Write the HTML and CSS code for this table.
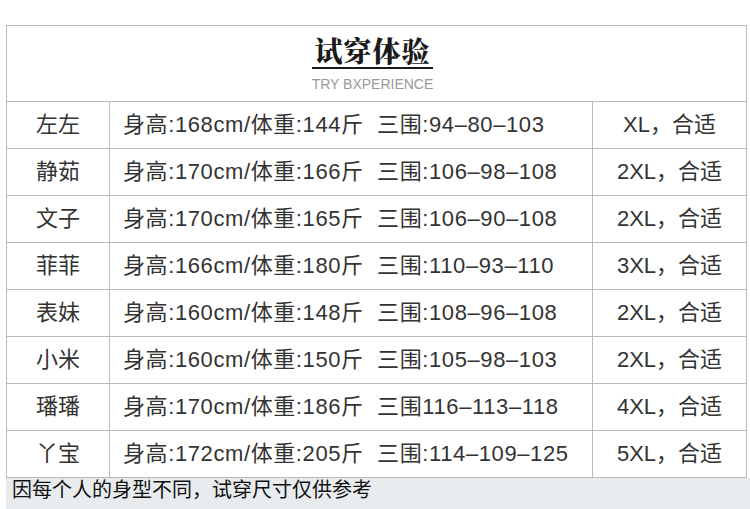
FILE: index.html
```html
<!DOCTYPE html>
<html lang="zh">
<head>
<meta charset="utf-8">
<title>试穿体验</title>
<link rel="stylesheet" href="styles.css">
</head>
<body>
<div class="page">
  <table class="sizes">
    <colgroup>
      <col class="c-name">
      <col class="c-info">
      <col class="c-fit">
    </colgroup>
    <thead>
      <tr>
        <th colspan="3" class="head">
          <div class="title-block">
            <div class="title">试穿体验</div>
            <div class="subtitle">TRY BXPERIENCE</div>
          </div>
        </th>
      </tr>
    </thead>
    <tbody>
      <tr><td class="name">左左</td><td class="info">身高:168cm/体重:144斤&nbsp;&nbsp;三围:94–80–103</td><td class="fit">XL，合适</td></tr>
      <tr><td class="name">静茹</td><td class="info">身高:170cm/体重:166斤&nbsp;&nbsp;三围:106–98–108</td><td class="fit">2XL，合适</td></tr>
      <tr><td class="name">文子</td><td class="info">身高:170cm/体重:165斤&nbsp;&nbsp;三围:106–90–108</td><td class="fit">2XL，合适</td></tr>
      <tr><td class="name">菲菲</td><td class="info">身高:166cm/体重:180斤&nbsp;&nbsp;三围:110–93–110</td><td class="fit">3XL，合适</td></tr>
      <tr><td class="name">表妹</td><td class="info">身高:160cm/体重:148斤&nbsp;&nbsp;三围:108–96–108</td><td class="fit">2XL，合适</td></tr>
      <tr><td class="name">小米</td><td class="info">身高:160cm/体重:150斤&nbsp;&nbsp;三围:105–98–103</td><td class="fit">2XL，合适</td></tr>
      <tr><td class="name">璠璠</td><td class="info">身高:170cm/体重:186斤&nbsp;&nbsp;三围116–113–118</td><td class="fit">4XL，合适</td></tr>
      <tr><td class="name">丫宝</td><td class="info">身高:172cm/体重:205斤&nbsp;&nbsp;三围:114–109–125</td><td class="fit">5XL，合适</td></tr>
    </tbody>
  </table>
  <div class="note">因每个人的身型不同，试穿尺寸仅供参考</div>
</div>
</body>
</html>
```

FILE: styles.css
```css
html, body {
  margin: 0;
  padding: 0;
  background: #ffffff;
}

body {
  font-family: "Liberation Sans", "Noto Sans CJK SC", sans-serif;
  color: #333333;
}

.page {
  padding: 25px 0 0 6px;
}

.sizes {
  width: 740px;
  border-collapse: collapse;
  table-layout: fixed;
}

.c-name { width: 103px; }
.c-info { width: 483px; }
.c-fit { width: 154px; }

.sizes td,
.sizes th {
  border: 1px solid #bababa;
  padding: 0;
}

.head {
  height: 75px;
  text-align: center;
  vertical-align: top;
  font-weight: normal;
}

.title-block {
  display: inline-block;
  padding-top: 8px;
  margin-right: 8px;
}

.title {
  font-family: "Noto Serif CJK SC", "Noto Sans CJK SC", serif;
  font-weight: 900;
  font-size: 28px;
  line-height: 32px;
  letter-spacing: 1px;
  color: #1a1a1a;
  border-bottom: 2px solid #1a1a1a;
  padding-bottom: 1px;
}

.subtitle {
  font-family: "Liberation Sans", sans-serif;
  font-size: 14px;
  line-height: 18px;
  color: #999999;
  margin-top: 6px;
}

.sizes tbody tr {
  height: 47px;
}

.sizes td {
  font-size: 22px;
  line-height: 26px;
  vertical-align: middle;
}

.name {
  text-align: center;
}

.sizes td.info {
  padding-left: 13px;
  white-space: nowrap;
  letter-spacing: 0.6px;
}

.fit {
  text-align: center;
}

.note {
  background: #e9ecef;
  height: 31px;
  font-size: 20px;
  line-height: 24px;
  padding-left: 6px;
  color: #111111;
}
```
